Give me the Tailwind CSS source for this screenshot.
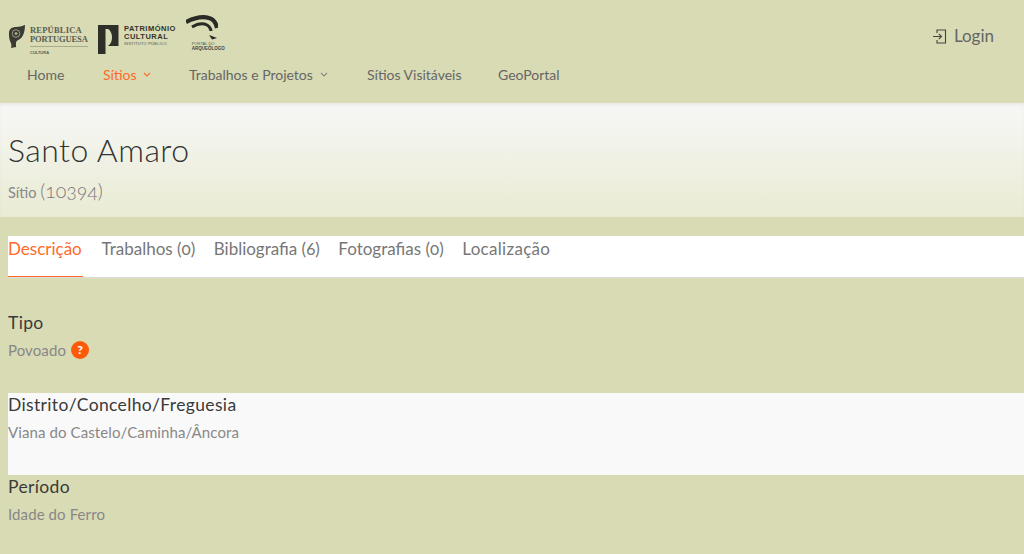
<!DOCTYPE html>
<html lang="en">
<head>
    <meta charset="UTF-8">
    <title>Santo Amaro</title>
    <script src="https://cdn.jsdelivr.net/npm/@tailwindcss/browser@4"></script>
</head>
<body class="min-h-screen bg-[#d8dbb4] font-['Lato','Noto_Sans',sans-serif] text-[#555] overflow-hidden h-[554px]">
    <!-- Header -->
    <header class="h-[103px]">
        <div class="flex justify-between pl-2 pr-[30px] pt-[16px] h-[65px]">
            <div class="flex items-start">
                <!-- Republica Portuguesa -->
                <div class="flex w-[90px] mt-[8px]">
                    <svg width="18" height="24" viewBox="0 0 18 24" class="mt-[1px] shrink-0">
                        <path d="M1 8 C1 4 4 2 8 2 C11 2 14 1 17 0 C17 5 16 9 14 12 C12 15 8 15 8 18 L8 22 L3 23 C4 20 3 18 2 16 C1 13 1 11 1 8 Z" fill="#3b3b33"/>
                        <circle cx="8" cy="8.500" r="3.800" fill="none" stroke="#a5a78a" stroke-width="0.900"/>
                        <circle cx="8" cy="8.500" r="1.500" fill="#a5a78a"/>
                    </svg>
                    <div class="ml-[4px] font-['Liberation_Serif',serif] font-bold text-[#5c5d50] text-[8.500px] leading-[9px] mt-[2px] whitespace-nowrap">
                        <div class="tracking-[0.2px]">REPÚBLICA</div>
                        <div class="tracking-[-0.1px]">PORTUGUESA</div>
                        <div class="border-t border-[#a9ab8e] mt-[2px] pt-[3px] font-['Liberation_Sans',sans-serif] text-[4px] leading-[5px]">CULTURA</div>
                    </div>
                </div>
                <!-- Patrimonio Cultural -->
                <div class="flex mt-[9px]">
                    <svg width="21" height="29" viewBox="0 0 21 29" class="shrink-0">
                        <path d="M0 0 H7.500 V29 H0 Z M7.500 0 H10 V4 H7.500 Z M10 0 H20.500 V21 H10 C13 19 14 16 14 12 C14 8 12 5 10 4 Z" fill="#2f2f2a"/>
                    </svg>
                    <div class="ml-[5px] font-['Liberation_Sans',sans-serif] font-bold text-[#33332d] text-[7.500px] leading-[8px] tracking-[0.5px] whitespace-nowrap">
                        <div>PATRIMÓNIO</div>
                        <div>CULTURAL</div>
                        <div class="text-[4px] leading-[6px] tracking-[0.2px] font-normal text-[#55564a]">INSTITUTO PÚBLICO</div>
                    </div>
                </div>
                <!-- Portal do Arqueologo -->
                <div class="ml-[10px] w-[40px] -mt-[1px]">
                    <svg width="32" height="25" viewBox="0 0 32 25" class="block">
                        <path d="M0 7 C8 3 16 1 23 3 C27 4 30 8 31 13" fill="none" stroke="#2a2a26" stroke-width="4.200"/>
                        <path d="M6 12 C11 9 17 8 21 10 C23 11 25 14 25 16" fill="none" stroke="#2a2a26" stroke-width="3"/>
                        <path d="M23 20 L31 23 L26 24.500 Z" fill="#2a2a26"/>
                    </svg>
                    <div class="ml-[6px] mt-[1px] font-['Liberation_Sans',sans-serif] text-[4px] leading-[5px] text-[#55564a] whitespace-nowrap">PORTAL DO</div>
                    <div class="ml-[6px] font-['Liberation_Sans',sans-serif] font-bold text-[4.500px] leading-[5px] text-[#44443c] whitespace-nowrap">ARQUEÓLOGO</div>
                </div>
            </div>
            <a class="flex items-center h-[40px] text-[17px] text-[#666]">
                <svg width="15" height="15" viewBox="0 0 15 15" fill="none" stroke="#444" stroke-width="1.100" class="mr-[7px]">
                    <path d="M5 4 V1 H13.500 V14 H5 V11"/>
                    <path d="M1 7.500 H9.500 M6.800 4.800 L9.500 7.500 L6.800 10.200"/>
                </svg>
                Login
            </a>
        </div>
        <nav class="flex text-[14px] text-[#666] pl-[27px] h-[18px] items-center">
            <a class="w-[76px]">Home</a>
            <a class="w-[86px] flex items-center text-[#ff6a2b]">Sítios
                <svg width="8" height="5" viewBox="0 0 8 5" fill="none" stroke="#ff6a2b" stroke-width="1.100" class="ml-[6px] mt-[1px]"><path d="M1 1 L4 4 L7 1"/></svg>
            </a>
            <a class="w-[178px] flex items-center">Trabalhos e Projetos
                <svg width="8" height="5" viewBox="0 0 8 5" fill="none" stroke="#888" stroke-width="1.100" class="ml-[7px] mt-[1px]"><path d="M1 1 L4 4 L7 1"/></svg>
            </a>
            <a class="w-[131px]">Sítios Visitáveis</a>
            <a>GeoPortal</a>
        </nav>
    </header>

    <!-- Title -->
    <section class="h-[114px] bg-gradient-to-b from-[#f7f7f6] to-[#e9ebd3] shadow-[inset_0_3px_4px_-2px_rgba(0,0,0,0.08)] pl-2 pt-[28px]">
        <h1 class="text-[32px] leading-[38px] text-[#333] font-light tracking-[0.45px]">Santo Amaro</h1>
        <p class="mt-[10px] text-[14.500px] leading-[24px] text-[#888]">Sítio <span class="text-[19.500px] font-light oldstyle-nums text-[#777]">(10394)</span></p>
    </section>

    <!-- Tabs -->
    <div class="ml-2 mt-[19px] h-[42px] bg-white border-b border-[#ddd] flex gap-[18.500px] text-[17px] text-[#777] oldstyle-nums">
        <a class="w-[75px] h-[41px] border-b border-[#ff6a2b] text-[#ff6a2b] leading-[26px] whitespace-nowrap">Descrição</a>
        <a class="leading-[26px]">Trabalhos (0)</a>
        <a class="leading-[26px]">Bibliografia (6)</a>
        <a class="leading-[26px]">Fotografias (0)</a>
        <a class="leading-[26px] tracking-[0.3px]">Localização</a>
    </div>

    <!-- Fields -->
    <div class="mt-[33px] pl-2 h-[82px]">
        <h3 class="text-[17.500px] tracking-[0.35px] leading-[23px] text-[#3a3a3a]">Tipo</h3>
        <p class="mt-[6px] flex items-center text-[15px] tracking-[0.1px] leading-[20px] text-[#888]">Povoado
            <span class="ml-[5px] w-[18px] h-[18px] rounded-full bg-[#ff5a0a] text-white text-[12px] font-black flex items-center justify-center">?</span>
        </p>
    </div>
    <div class="ml-2 h-[82px] bg-[#f9f9f9]">
        <h3 class="text-[17.500px] tracking-[0.35px] leading-[23px] text-[#3a3a3a]">Distrito/Concelho/Freguesia</h3>
        <p class="mt-[6px] text-[15px] tracking-[0.1px] leading-[20px] text-[#888]">Viana do Castelo/Caminha/Âncora</p>
    </div>
    <div class="pl-2">
        <h3 class="text-[17.500px] tracking-[0.35px] leading-[23px] text-[#3a3a3a]">Período</h3>
        <p class="mt-[6px] text-[15px] tracking-[0.1px] leading-[20px] text-[#888]">Idade do Ferro</p>
    </div>
</body>
</html>
